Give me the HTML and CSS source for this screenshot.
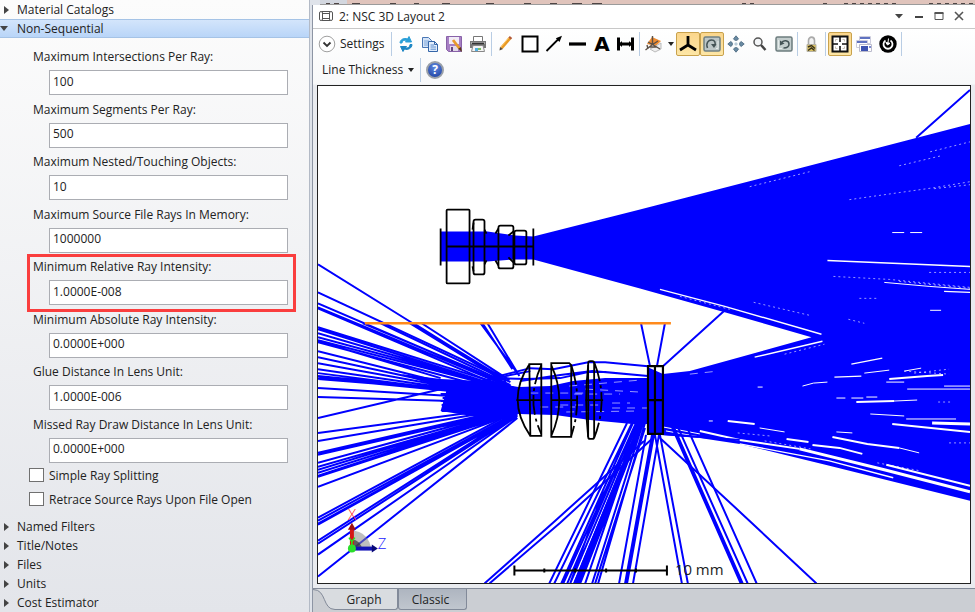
FILE: index.html
```
<!DOCTYPE html>
<html lang="en">
<head>
  <title>NSC 3D Layout</title>
  <meta charset="UTF-8">
  <link rel="stylesheet" href="styles.css">
</head>
<body>
  <div class="app">
    <aside class="explorer">
      <button class="tree-row"><span class="arrow"></span>Material Catalogs</button>
      <button class="tree-row open"><span class="arrow"></span>Non-Sequential</button>

      <form class="form">
        <div class="fields">
          <div class="field">
            <label for="max-intersections">Maximum Intersections Per Ray:</label>
            <input type="text" id="max-intersections" value="100">
          </div>
          <div class="field">
            <label for="max-segments">Maximum Segments Per Ray:</label>
            <input type="text" id="max-segments" value="500">
          </div>
          <div class="field">
            <label for="max-nested">Maximum Nested/Touching Objects:</label>
            <input type="text" id="max-nested" value="10">
          </div>
          <div class="field">
            <label for="max-source">Maximum Source File Rays In Memory:</label>
            <input type="text" id="max-source" value="1000000">
          </div>
          <div class="field marked">
            <label for="min-relative">Minimum Relative Ray Intensity:</label>
            <input type="text" id="min-relative" value="1.0000E-008">
          </div>
          <div class="field">
            <label for="min-absolute">Minimum Absolute Ray Intensity:</label>
            <input type="text" id="min-absolute" value="0.0000E+000">
          </div>
          <div class="field">
            <label for="glue-distance">Glue Distance In Lens Unit:</label>
            <input type="text" id="glue-distance" value="1.0000E-006">
          </div>
          <div class="field">
            <label for="missed-ray">Missed Ray Draw Distance In Lens Unit:</label>
            <input type="text" id="missed-ray" value="0.0000E+000">
          </div>
        </div>
        <div class="check">
          <input type="checkbox" id="simple-splitting">
          <label for="simple-splitting">Simple Ray Splitting</label>
        </div>
        <div class="check">
          <input type="checkbox" id="retrace">
          <label for="retrace">Retrace Source Rays Upon File Open</label>
        </div>
      </form>

      <button class="tree-row"><span class="arrow"></span>Named Filters</button>
      <button class="tree-row"><span class="arrow"></span>Title/Notes</button>
      <button class="tree-row"><span class="arrow"></span>Files</button>
      <button class="tree-row"><span class="arrow"></span>Units</button>
      <button class="tree-row"><span class="arrow"></span>Cost Estimator</button>
    </aside>

    <main class="workspace">
      <!-- edge of the editor sheet behind the window -->
      <div class="sheet-edge">
        <svg width="655" height="5" viewBox="0 0 655 5">
          <path d="M0 0H27V4H0z" fill="#d3d7df"/>
          <path d="M6 3.500H10M14 3.500H19M32 3.500H40M70 3.500H76M94 3.500H99M122 3.500H130M166 3.500H174M204 3.500H211M230 3.500H237M252 3.500H262M272 3.500H282" stroke="#4e4544"/>
          <path d="M422 3.500H436M503 3.500H507M524 3.500H580M609 3.500H655" stroke="#4e4544" stroke-dasharray="4 4"/>
        </svg>
      </div>

      <section class="window">
        <header class="titlebar">
          <svg width="16" height="14" viewBox="0 0 16 14" fill="none" stroke="#555">
            <path d="M4 2.500H12M4 11.500H12M4.500 4.500H11.500V9.500H4.500z"/>
            <rect x="1.500" y="2.500" width="3" height="9" rx="1.500"/>
            <rect x="11.500" y="2.500" width="3" height="9" rx="1.500"/>
          </svg>
          <h1>2: NSC 3D Layout 2</h1>
          <div class="window-buttons">
            <button title="Menu"><svg width="12" height="12" viewBox="0 0 12 12"><path d="M2 4H10L6 8.500z" fill="#444"/></svg></button>
            <button title="Minimize"><svg width="12" height="12" viewBox="0 0 12 12"><path d="M2 7H10" stroke="#444" stroke-width="2"/></svg></button>
            <button title="Maximize"><svg width="12" height="12" viewBox="0 0 12 12"><path d="M2 3V9.500H10V3z" fill="none" stroke="#555"/><path d="M1.500 3H10.500" stroke="#555" stroke-width="2"/></svg></button>
            <button title="Close"><svg width="12" height="12" viewBox="0 0 12 12"><path d="M2 2L10 10M10 2L2 10" stroke="#555" stroke-width="1.600"/></svg></button>
          </div>
        </header>

        <div class="toolbar">
          <div class="tool-row">
            <button class="settings-btn">
              <svg width="18" height="18" viewBox="0 0 18 18" fill="none"><circle cx="9" cy="9" r="7.800" fill="#fff" stroke="#a0a0a0"/><path d="M5.500 7.500L9 11L12.500 7.500" stroke="#333" stroke-width="1.800"/></svg>
              Settings
            </button>
            <span class="sep"></span>
            <button class="tool" title="Update">
              <svg width="18" height="18" viewBox="0 0 18 18"><path d="M3 8C3 4.500 7 2.500 10.500 4L12 1.500L14.500 7H8.500L9.700 5.300C7 4.800 5 6 5 8z" fill="#2a9fd8" stroke="#2a9fd8"/><path d="M15 9.500C15 13 11 15.500 7.500 14L6 16.500L3.500 11.500H9.500L8.300 13C11 13.500 13 12 13 9.500z" fill="#1c86c4" stroke="#1c86c4"/></svg>
            </button>
            <button class="tool" title="Copy">
              <svg width="18" height="18" viewBox="0 0 18 18"><path d="M1.500 2.500H7.500L10.500 5.500V12.500H1.500z" fill="#d5e4f7" stroke="#4a77b5"/><path d="M3 6H8M3 8H7M3 10H7" stroke="#7fa6da"/><path d="M7.500 6.500H13.500L16.500 9.500V16.500H7.500z" fill="#e3eefc" stroke="#3465a8"/><path d="M13.500 6.500V9.500H16.500" fill="none" stroke="#3465a8"/><path d="M9.500 10H13M9.500 12H15M9.500 14.200H15" stroke="#5b8bcc"/></svg>
            </button>
            <button class="tool" title="Save">
              <svg width="18" height="18" viewBox="0 0 18 18"><path d="M1.500 1.500H16.500V16.500H3.500L1.500 14.500z" fill="#a77fc4" stroke="#8862a8"/><path d="M4 2H14V9H4z" fill="#f1ebf7"/><path d="M5 11H13V16H5z" fill="#e2d9e8"/><path d="M6 12H8V16H6z" fill="#634681"/><path d="M8 5L14.500 13.500" stroke="#e89a2b" stroke-width="2.800"/><path d="M13.200 13.800L17 17L15.800 12z" fill="#5a3715"/></svg>
            </button>
            <button class="tool" title="Print">
              <svg width="18" height="18" viewBox="0 0 18 18"><path d="M4.500 1.500H13.500V7H4.500z" fill="#fff" stroke="#777"/><path d="M1 6H17V13H1z" fill="#777"/><path d="M2 7H16V9H2z" fill="#aaa"/><path d="M3 8.500H15" stroke="#333" stroke-width="1.500"/><path d="M4 10.500H14L15.500 16.500H2.500z" fill="#f4f4f4" stroke="#888"/><path d="M6 13H9V16H6z" fill="#53aee0"/><path d="M9 13H12V15H9z" fill="#7cbe62"/></svg>
            </button>
            <span class="sep"></span>
            <button class="tool" title="Draw">
              <svg width="18" height="18" viewBox="0 0 18 18"><path d="M4.500 13L13.500 2.500" stroke="#e99a24" stroke-width="3"/><path d="M3.800 12.200L12 2.500" stroke="#ffc868"/><path d="M12.700 3.600L14 2" stroke="#b35a3b" stroke-width="3"/><path d="M3 12L2.500 15.500L6 14z" fill="#54483b"/></svg>
            </button>
            <button class="tool" title="Rectangle">
              <svg width="18" height="18" viewBox="0 0 18 18"><rect x="1.500" y="1.500" width="15" height="15" fill="#fff" stroke="#000" stroke-width="2"/></svg>
            </button>
            <button class="tool" title="Arrow">
              <svg width="18" height="18" viewBox="0 0 18 18"><path d="M1.500 16L13 4.500" stroke="#000" stroke-width="1.800"/><path d="M17 .8L14.500 7L10.800 3.300z"/></svg>
            </button>
            <button class="tool" title="Line">
              <svg width="18" height="18" viewBox="0 0 18 18"><path d="M0 9H17" stroke="#000" stroke-width="3.200"/></svg>
            </button>
            <button class="tool letter" title="Text">A</button>
            <button class="tool" title="Dimension">
              <svg width="18" height="18" viewBox="0 0 18 18"><path d="M1.500 2.500V15.500M15.500 2.500V15.500" stroke="#000" stroke-width="3"/><path d="M1 9H16" stroke="#000" stroke-width="3"/><path d="M2 9L5 6V12zM15 9L12 6V12z"/></svg>
            </button>
            <span class="sep"></span>
            <button class="tool drop" title="View">
              <svg width="20" height="18" viewBox="0 0 20 18"><path d="M8 2L17 6L12 11L3 9z" fill="#ee8c32"/><path d="M10 12L17 8V14L11 17L6 14z" fill="#eee" stroke="#bbb"/><path d="M8.500 1V9.500L1.500 15M8.500 9.500L16 14M4 7L8.500 9.500L14 6M4 14L3 10M6 12L13 12" fill="none" stroke="#5c5148" stroke-width="1.400"/></svg>
              <span class="caret"></span>
            </button>
            <button class="tool on" title="Axes">
              <svg width="20" height="20" viewBox="0 0 20 20"><path d="M10 2V11L2 16M10 11L18 16" fill="none" stroke="#000" stroke-width="2.800"/></svg>
            </button>
            <button class="tool on" title="Rotate">
              <svg width="18" height="18" viewBox="0 0 18 18"><rect x="1" y="2" width="16" height="14" rx="1.500" fill="#bcc6c7" stroke="#6f8083" stroke-width="1.500"/><path d="M4.500 13C2.500 8 5.500 5 8.500 5C12 5 13 8 11.500 11" fill="none" stroke="#445356" stroke-width="1.500"/><path d="M8 9L11 13L13.500 9z" fill="#445356"/><path d="M13 13.500H15V6" fill="none" stroke="#e5eceb"/></svg>
            </button>
            <button class="tool" title="Pan">
              <svg width="18" height="18" viewBox="0 0 18 18" fill="#6a8ba3" stroke="#45637b" stroke-width=".8"><path d="M9 .8L11.500 3.800L10.200 5.300H7.800L6.500 3.800zM9 17.200L11.500 14.200L10.200 12.700H7.800L6.500 14.200zM.8 9L3.800 6.500L5.300 7.800V10.200L3.800 11.500zM17.200 9L14.200 6.500L12.700 7.800V10.200L14.200 11.500z"/><path d="M9 7L11 9L9 11L7 9z" fill="#b9cbd7" stroke="none"/></svg>
            </button>
            <button class="tool" title="Zoom">
              <svg width="18" height="18" viewBox="0 0 18 18" fill="none"><circle cx="7" cy="7" r="4" fill="#f4f6f8" stroke="#555" stroke-width="1.500"/><path d="M10 10L14.500 15" stroke="#444" stroke-width="2.400"/></svg>
            </button>
            <button class="tool" title="Reset view">
              <svg width="18" height="18" viewBox="0 0 18 18"><rect x="1" y="2" width="16" height="14" rx="1.500" fill="#c3cdcd" stroke="#6c7c7e" stroke-width="1.500"/><path d="M6.500 8C8 4.500 14 5 14 9C14 12 11 13 8.500 13" fill="none" stroke="#445356" stroke-width="1.500"/><path d="M5 5.500V10.500L9.500 8.500z" fill="#445356"/><path d="M3.500 5V13.500H7" fill="none" stroke="#e5eceb"/></svg>
            </button>
            <span class="sep"></span>
            <button class="tool" title="Lock">
              <svg width="18" height="18" viewBox="0 0 18 18"><path d="M5.500 10V5.500C5.500 1 11.500 1 11.500 5.500V10" fill="#f2f2f2" stroke="#aaa" stroke-width="1.600"/><path d="M4 9.500H13V16.500H4z" fill="#d9c060" stroke="#b5b2a5"/><path d="M5 12L8.500 10.500L12 13.500M5 15.500L8.500 13L11.500 15.500" fill="none" stroke="#39331d" stroke-width="1.500"/></svg>
            </button>
            <span class="sep"></span>
            <button class="tool on" title="Fit">
              <svg width="18" height="18" viewBox="0 0 18 18" fill="none" stroke="#111"><rect x="1.500" y="1.500" width="15" height="15" fill="#fff" stroke-width="2"/><path d="M9 2V7M9 11V16M2 9H7M11 9H16" stroke-width="1.600"/><path d="M4.500 6.500V4.500H6.500M11.500 4.500H13.500V6.500M13.500 11.500V13.500H11.500M6.500 13.500H4.500V11.500" stroke="#c9c1b4"/></svg>
            </button>
            <button class="tool" title="Windows">
              <svg width="18" height="18" viewBox="0 0 18 18"><path d="M4.500 1.500H15.500V8.500H4.500z" fill="#fff" stroke="#ccd"/><path d="M5 2H15V4H5z" fill="#5f72c0"/><path d="M1.500 5.500H12.500V12.500H1.500z" fill="#fff" stroke="#ccd"/><path d="M2 6H12V8H2z" fill="#5f72c0"/><path d="M4.500 9.500H16.500V16.500H4.500z" fill="#fff" stroke="#bbc"/><path d="M6 11H13V16H6z" fill="#3f54b0"/><path d="M14 11H16V13H14z" fill="#7d8bd0"/></svg>
            </button>
            <button class="tool" title="Animate">
              <svg width="18" height="18" viewBox="0 0 18 18"><circle cx="9" cy="9" r="8.700"/><path d="M6.500 5.500A4.500 4.500 0 1 0 11.500 5.500" fill="none" stroke="#fff" stroke-width="1.800"/><path d="M9.500 3.500L8.800 9M6.800 7.500L8.500 10L11 8.300z" fill="#fff" stroke="#fff"/></svg>
            </button>
            <span class="sep"></span>
          </div>
          <div class="tool-row">
            <button class="thickness-btn">Line Thickness<span class="caret"></span></button>
            <span class="sep"></span>
            <button class="tool help" title="Help">?</button>
          </div>
        </div>

        <div class="canvas">
          <svg class="plot" viewBox="317 85 654 499" fill="none">
            <!-- dense ray bundles -->
            <g fill="#00f">
              <path d="M440 231H487L515 235L533 236L640 209L971 123V501L830 466L740 444L700 438L648 434V367L663 374L690 371L740 357L812 337L725 312L640 288L533 259L515 259L487 261H440z"/>
              <path d="M446 388L486 381L518 387L550 386L573 381L605 378H663V424L632 424L590 420L555 415L518 414L470 411H446z"/>
              <path d="M400 374L440 379L500 382L520 389V410L490 419L440 411L446 390z"/>
            </g>
            <g stroke="#fff" stroke-width="2">
              <path d="M800 449L885 470L971 492" stroke-width="3"/>
              <path d="M700 431L740 440L800 449"/>
              <path d="M663 427L700 434M666 431L700 437" stroke-width="1"/>
              <path d="M887 465L971 486M813 445L840 448L863 454M833 437L868 444L900 448M893 424L971 432M890 379L928 376L944 375"/>
              <path d="M933 423L971 424" stroke-width="3"/>
              <path d="M728 421L755 424M857 402L895 401M787 439L809 442"/>
            </g>
            <g stroke="#fff" stroke-width="1.400">
              <path d="M852 364L883 358M755 357L823 341M835 377L862 376M660 289L725 306L822 334M828 260L971 266M945 291L971 292M740 444L830 461L894 478"/>
            </g>
            <g stroke="#fff" stroke-width="1">
              <path d="M885 282L930 286L971 289M907 419H957M908 389H971M945 386H971M895 401L918 400M871 414L905 416M760 428L785 432M900 448L920 453M905 371L922 368M803 386L814 383L828 382M837 398H846M852 398H864M867 397H878M837 432L853 433M865 373L890 370M887 382H905M893 232H905M911 232H923M931 310H942M758 387H763M709 421H713"/>
              <path d="M750 186L810 171M931 151L971 141M900 165L942 155M850 199L935 187L971 181M935 188L971 184M834 276L890 279L971 287M900 281L971 288M754 302L810 315M680 296L730 309M849 319L865 323M785 354L825 344M738 433L770 436M878 463L921 471M765 441L811 449M915 373L950 369M930 272H971M939 402H952M860 298H880M905 371L950 374M950 443H971" stroke-dasharray="2 3" opacity=".6"/>
              <path d="M569 386L640 380M574 394H620M612 408H648M566 412L640 411M540 407H575M530 393H590M585 389L640 392M560 405H600M612 403H630M690 374L718 371" stroke-dasharray="8 7" opacity=".6"/>
            </g>

            <!-- rays leaving the left side -->
            <g stroke="#00f" stroke-width="2">
              <path d="M317 264L412 323L501 377M380 323L510 385M421 323L509 380M409 323L502 380M413 323L506 381M384 325L500 380"/>
              <path d="M317 292L510 382M317 303L510 386M317 307L512 388M317 308L500 386M362 323L505 383"/>
              <path d="M317 327L510 387M317 329L505 388M317 333L505 388M317 337L510 389M317 340L510 390M317 342L470 383M317 341L440 378"/>
              <path d="M317 351L460 387M317 357L460 388M317 363L460 389M317 369L460 390M317 373L450 390M317 376L450 389M317 378L450 391M317 379L430 388"/>
              <path d="M317 388L450 396M317 397L450 401M317 418L445 388L500 377L530 371"/>
              <path d="M317 433L490 410M317 441L490 412M317 453L500 411M317 455L500 413M317 463L510 410M317 467L505 413M317 470L510 411M317 473L510 412M317 476L512 412M317 477L514 413M317 487L515 413"/>
              <path d="M317 518L515 411M317 521L517 412M317 524L514 415M317 525L517 414M317 541L517 413M317 544L517 415M317 555L517 416M317 577L517 418"/>
              <path d="M440 394H455M442 398H455M440 401H455M441 405H455M443 409H455M441 411H455"/>
              <path d="M480 323L517 373M487 323L519 376M482 323L512 369"/>
              <path d="M498 376L530 368L553 369L588 362L605 362L648 366M500 378L525 379L560 378L588 372L605 372L648 376M520 381L560 375L592 371L648 376"/>
            </g>

            <!-- rays below and above the cover plate -->
            <g stroke="#00f" stroke-width="2">
              <path d="M484 584L555 521L644 441M489 584L560 523L653 438"/>
              <path d="M549 584L627 423M554 584L632 423M561 584L633 423M563 584L636 423M567 584L636 423M570 584L638 423M574 584L640 423M576 584L641 423M578 584L642 423M580 584L643 423M585 584L640 423M592 584L643 423M595 584L645 428M598 584L645 423M570 584L600 500L642 425"/>
              <path d="M619 584L646 435M625 584L652 435M627 584L654 435M633 584L659 435M682 584L655 435M688 584L660 435M660 438L740 512L817 584"/>
              <path d="M741 584L671 425M743 584L673 425M748 584L677 425M757 584L686 425M663 434L740 440"/>
              <path d="M641 323L650 366M665 323L657 366M663 366L724 311M917 137L971 89"/>
            </g>
            <path d="M575 584L620 475L640 425" stroke="#00f" stroke-width="4"/>
            <path d="M364 323H671" stroke="#ff8a1c" stroke-width="2.500"/>

            <!-- lens outlines -->
            <g stroke="#000" stroke-width="1.800">
              <path d="M440 228V265M533 228V265M446 246H533"/>
              <rect x="446" y="209" width="23" height="74" rx="1"/>
              <rect x="473" y="219" width="11" height="55" rx="2"/>
              <path d="M473 222L472 229M484 229L486 233M473 271L472 266M484 264L486 260"/>
              <rect x="498" y="225" width="15" height="43" rx="2"/>
              <path d="M498 228L495 233M498 265L495 260M513 231L508 235M513 262L508 257"/>
              <rect x="514" y="230" width="12" height="34" rx="2"/>
              <path d="M529 364H541V436H530zM529 364Q505 400 530 436"/>
              <path d="M541 365Q525 400 541 434" stroke-dasharray="20 4 3 4"/>
              <path d="M551 363H569L571 365V437H551zM551 365Q567 400 551 436"/>
              <path d="M571 365Q583 400 571 436M594 362Q609 400 594 438" stroke-dasharray="20 4 3 4"/>
              <rect x="588" y="361" width="6" height="78" rx="2"/>
              <path d="M588 365Q584 400 588 437M516 400H541M551 400H577M585 400H603"/>
              <path d="M648 366H663V434H648zM655 366V434M648 400H663" stroke-width="2.200"/>
            </g>

            <!-- scale bar -->
            <path d="M514 571H667M514 566V576M667 566V576M544 569V573M575 569V573M606 569V573M636 569V573" stroke="#000" stroke-width="2"/>
            <text class="scale-text" x="675" y="576">10 mm</text>

            <!-- orientation triad -->
            <path d="M351 531A19 19 0 0 1 370 550H351z" fill="#888" opacity=".55"/>
            <path d="M351 540A10 10 0 0 1 361 550H351z" fill="#333" opacity=".7"/>
            <path d="M351 550V528" stroke="#d51515" stroke-width="4"/>
            <path d="M351 523L355 530H347z" fill="#a01010"/>
            <path d="M351 549H372" stroke="#1212b8" stroke-width="4"/>
            <path d="M377 549L371 545V553z" fill="#080878"/>
            <path d="M348 538L351 542L354 538M351 542V546" stroke="#1eea1e" stroke-width="1.500"/>
            <circle cx="351" cy="549" r="4" fill="#2ade2a"/>
            <text class="axis-text" x="347" y="520" fill="#f22">X</text>
            <text class="axis-text" x="377" y="549" fill="#22f">Z</text>
          </svg>
        </div>

        <nav class="view-tabs">
          <svg class="tab-slope" width="22" height="22" viewBox="0 0 22 22"><path d="M0 0C14 0 9 20 22 20V0z" fill="#d9dce0"/><path d="M0 .5C14 .5 9 20.500 22 20.500" fill="none" stroke="#828a99"/></svg>
          <button class="view-tab active">Graph</button>
          <button class="view-tab">Classic</button>
        </nav>
      </section>
    </main>
  </div>
</body>
</html>
```
FILE: styles.css
```
* {
  box-sizing: border-box;
}
body {
  margin: 0;
  font-family: "Open Sans", "Noto Sans", sans-serif;
  font-size: 12px;
  color: #222;
  background: #dfe3ea;
}
button, input {
  font: inherit;
  color: inherit;
}
button {
  border: none;
  background: none;
  padding: 0;
}
.app {
  display: flex;
  height: 100vh;
  min-height: 612px;
}

/* left panel */
.explorer {
  flex: 0 0 310px;
  display: flex;
  flex-direction: column;
  background: linear-gradient(#fcfcfc, #e3e5ea);
  border-right: 1px solid #b3bac6;
}
.tree-row {
  display: flex;
  align-items: center;
  height: 19px;
  flex: none;
  text-align: left;
}
.tree-row .arrow {
  width: 17px;
  flex: none;
}
.tree-row .arrow::before {
  content: "";
  display: block;
  width: 0;
  margin-left: 4px;
  border: 4px solid transparent;
  border-left: 5px solid #444;
  border-right: 0;
}
.tree-row.open {
  background: linear-gradient(#d3e5fb, #b9d5f8);
  border-top: 1px solid #a5c3e6;
  border-bottom: 1px solid #a5c3e6;
}
.tree-row.open .arrow::before {
  margin-left: 0;
  border: 4px solid transparent;
  border-top: 5px solid #444;
  border-bottom: 0;
}
.form {
  flex: 1;
  display: flex;
  flex-direction: column;
  padding: 9px 21px 6px 29px;
}
.fields {
  flex: 1;
  display: flex;
  flex-direction: column;
  justify-content: space-between;
  padding-left: 4px;
}
.field {
  position: relative;
}
.field label {
  display: block;
  line-height: 20px;
  margin-bottom: 3px;
}
.field input {
  display: block;
  width: calc(100% - 16px);
  height: 25px;
  margin-left: 16px;
  padding: 0 3px 3px;
  border: 1px solid #abadb3;
  background: #fff;
}
.field.marked::after {
  content: "";
  position: absolute;
  inset: -3px -8px -7px -6px;
  border: 3px solid #fa3e3e;
  pointer-events: none;
}
.check {
  display: flex;
  align-items: center;
  gap: 5px;
  height: 24px;
}
.check input {
  appearance: none;
  width: 15px;
  height: 14px;
  margin: 0;
  border: 1px solid #707070;
  background: #fff;
}

/* right side */
.workspace {
  flex: 1;
  min-width: 0;
  display: flex;
  flex-direction: column;
  padding-left: 2px;
}
.sheet-edge {
  height: 5px;
  margin-left: 8px;
  background: #e0c4bc;
  border-bottom: 1px solid #9b9b9b;
  overflow: hidden;
}
.sheet-edge svg {
  display: block;
}
.window {
  flex: 1;
  display: flex;
  flex-direction: column;
  border-left: 1px solid #8d95a4;
  background: #fff;
}
.titlebar {
  display: flex;
  align-items: center;
  gap: 5px;
  height: 24px;
  padding: 0 10px 0 5px;
  border-bottom: 1px solid #c8c8c8;
}
.titlebar h1 {
  flex: 1;
  margin: 0;
  font-size: 12px;
  font-weight: normal;
}
.window-buttons {
  display: flex;
  gap: 8px;
}
.window-buttons button, .window-buttons svg {
  display: block;
}
.toolbar {
  display: flex;
  flex-direction: column;
  gap: 2px;
  padding: 3px 5px;
  background: linear-gradient(#fff, #f7f8f9);
}
.tool-row {
  display: flex;
  align-items: center;
  height: 24px;
}
.settings-btn {
  display: flex;
  align-items: center;
  gap: 4px;
  width: 72px;
}
.sep {
  width: 1px;
  height: 24px;
  margin: 0 2px 0 1px;
  background: #b9cde4;
}
.tool {
  display: flex;
  align-items: center;
  justify-content: center;
  width: 24px;
  height: 24px;
}
.tool.on {
  background: linear-gradient(#fbd68c, #fde6a6);
  border: 1px solid #c9a24c;
  border-radius: 2px;
}
.tool.drop {
  width: 34px;
  gap: 4px;
}
.tool.letter {
  font-family: "DejaVu Sans", sans-serif;
  font-size: 20px;
  font-weight: bold;
  color: #000;
}
.tool.help {
  width: 18px;
  height: 18px;
  margin-left: 3px;
  border: 2px solid #9aa0a8;
  border-radius: 50%;
  background: radial-gradient(circle at 50% 30%, #5d87e0, #1b3d9c);
  color: #fff;
  font-weight: bold;
}
.caret {
  border: 3px solid transparent;
  border-top: 4px solid #222;
  border-bottom: 0;
}
.thickness-btn {
  display: flex;
  align-items: center;
  justify-content: space-between;
  width: 101px;
  padding: 0 5px 0 4px;
}
.canvas {
  flex: 1;
  min-height: 0;
  margin: 0 4px;
  border: 1px solid #222;
  background: #fff;
  box-shadow: 0 0 0 4px #e9ebef;
  clip-path: inset(0 -4px -4px -4px);
}
.plot {
  display: block;
  width: 100%;
  height: 100%;
}
.scale-text {
  font-size: 15px;
  fill: #222;
}
.axis-text {
  font-size: 15px;
  font-weight: 300;
}

/* bottom tabs */
.view-tabs {
  display: flex;
  height: 24px;
  margin-top: 4px;
  border-top: 1px solid #828a99;
  background: #cbced3;
}
.tab-slope {
  display: block;
}
.view-tab {
  height: 21px;
  width: 69px;
  padding-right: 4px;
  border: 1px solid #828a99;
  border-top: none;
  border-radius: 0 0 3px 3px;
  background: linear-gradient(#aeb5c0, #c0c6ce);
}
.view-tab.active {
  width: 63px;
  border-left: none;
  border-radius: 0 0 3px 0;
  background: #d9dce0;
}
```
